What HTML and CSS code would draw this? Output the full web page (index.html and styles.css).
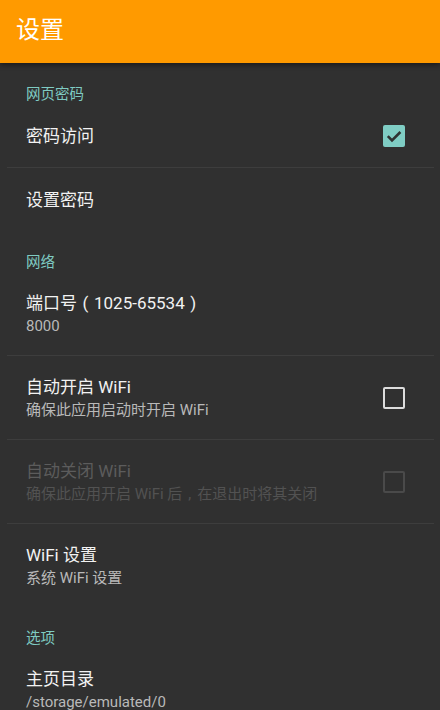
FILE: index.html
```html
<!DOCTYPE html>
<html lang="zh-CN">
<head>
    <meta charset="UTF-8">
    <meta name="viewport" content="width=device-width, initial-scale=1.0">
    <title>设置</title>
    <link rel="stylesheet" href="styles.css">
</head>
<body>
<header class="toolbar">
    <h1>设置</h1>
</header>
<main class="prefs">

    <h2 class="category">网页密码</h2>
    <div class="pref single">
        <div class="pref-text">
            <div class="pref-title">密码访问</div>
        </div>
        <span class="checkbox checked">
            <svg viewBox="0 0 22 22" width="22" height="22">
                <path d="M4.8 11.2 L9 15.4 L17.4 7" fill="none" stroke="#2f3332" stroke-width="2.6"/>
            </svg>
        </span>
    </div>
    <div class="pref single last">
        <div class="pref-text">
            <div class="pref-title">设置密码</div>
        </div>
    </div>

    <h2 class="category">网络</h2>
    <div class="pref">
        <div class="pref-text">
            <div class="pref-title">端口号<span class="paren">(</span>1025-65534<span class="paren">)</span></div>
            <div class="pref-summary">8000</div>
        </div>
    </div>
    <div class="pref">
        <div class="pref-text">
            <div class="pref-title">自动开启 WiFi</div>
            <div class="pref-summary">确保此应用启动时开启 WiFi</div>
        </div>
        <span class="checkbox"></span>
    </div>
    <div class="pref disabled">
        <div class="pref-text">
            <div class="pref-title">自动关闭 WiFi</div>
            <div class="pref-summary">确保此应用开启 WiFi 后<span class="comma">,</span>在退出时将其关闭</div>
        </div>
        <span class="checkbox"></span>
    </div>
    <div class="pref last">
        <div class="pref-text">
            <div class="pref-title">WiFi 设置</div>
            <div class="pref-summary">系统 WiFi 设置</div>
        </div>
    </div>

    <h2 class="category">选项</h2>
    <div class="pref last">
        <div class="pref-text">
            <div class="pref-title">主页目录</div>
            <div class="pref-summary">/storage/emulated/0</div>
        </div>
    </div>
</main>
</body>
</html>
```

FILE: styles.css
```css
body {
    font-family: Roboto, "Noto Sans CJK SC", sans-serif;
    margin: 0;
    padding: 0;
    background-color: #303030;
    color: #f2f2f2;
    height: 710px;
    overflow: hidden;
}

.toolbar {
    background: #ff9a00;
    height: 63px;
    display: flex;
    align-items: center;
    padding-left: 16px;
    box-shadow: 0 2px 5px rgba(0, 0, 0, 0.45);
    position: relative;
}

.toolbar h1 {
    margin: 0;
    font-size: 24px;
    font-weight: normal;
    color: #fff;
    line-height: 30px;
    margin-top: -3px;
}

.category {
    margin: 0;
    padding: 23px 0 0 26px;
    font-size: 14.5px;
    font-weight: normal;
    line-height: 18px;
    color: #7fcbc2;
}

.pref {
    display: flex;
    align-items: center;
    margin: 0 6px 0 7px;
    padding: 20px 29px 19px 19px;
    border-bottom: 1px solid #3d3d3d;
}

.pref.single {
    padding-top: 0;
    padding-bottom: 0;
    box-sizing: border-box;
    height: 64px;
}

.pref.last {
    border-bottom: none;
}

.pref.single.last {
    height: 63px;
}

.pref-text {
    flex: 1;
}

.pref-title {
    font-size: 17px;
    line-height: 22px;
}

.pref-summary {
    margin-top: 2px;
    font-size: 15px;
    line-height: 20px;
    color: #b9b9b9;
}

/* full-width punctuation, centred like the old Android fallback font */
.paren {
    display: inline-block;
    width: 17px;
    text-align: center;
}

.comma {
    display: inline-block;
    width: 15px;
    text-align: center;
}

.checkbox {
    width: 22px;
    height: 22px;
    box-sizing: border-box;
    border: 2px solid #dcdcdc;
    border-radius: 2px;
    display: flex;
}

.checkbox.checked {
    border: none;
    background: #7fcdc4;
}

.disabled .pref-title {
    color: #5c5c5c;
}

.disabled .pref-summary {
    color: #525252;
}

.disabled .checkbox {
    border-color: #4a4a4a;
}
```
